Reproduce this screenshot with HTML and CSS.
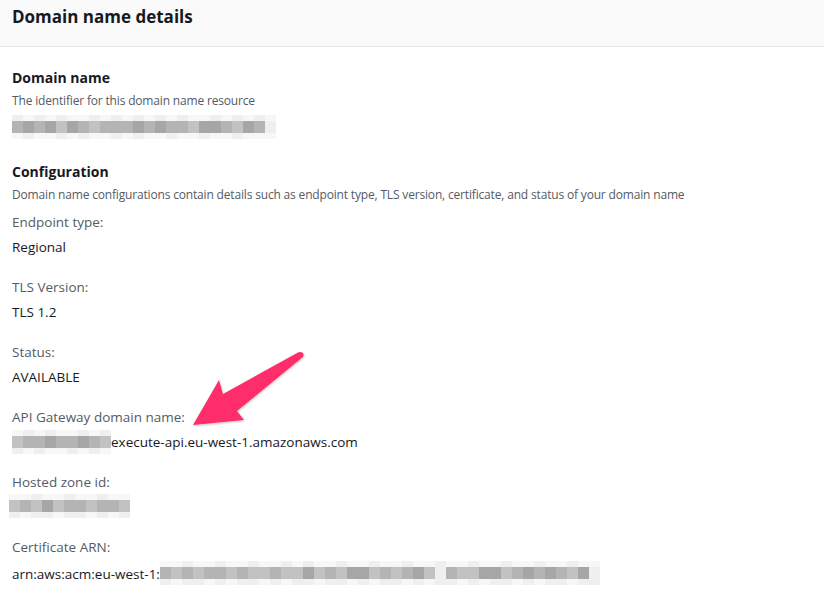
FILE: index.html
```html
<!DOCTYPE html>
<html>
<head>
<meta charset="utf-8">
<link rel="stylesheet" href="styles.css">
</head>
<body>
<div class="panel">
  <header class="panel-header"><h2>Domain name details</h2></header>
  <div class="panel-body">
    <section class="group">
      <h3>Domain name</h3>
      <p class="desc">The identifier for this domain name resource</p>
      <div class="blur blur-domain">
        <div class="row top"><span class="c l2"></span><span class="c l1"></span><span class="c l2"></span><span class="c l1"></span><span class="c l2"></span><span class="c l1"></span><span class="c l1"></span><span class="c l2"></span><span class="c l1"></span><span class="c l2"></span><span class="c l1"></span><span class="c l2"></span><span class="c l1"></span><span class="c l2"></span><span class="c l1"></span><span class="c l2"></span><span class="c l1"></span><span class="c l1"></span><span class="c l2"></span><span class="c l1"></span><span class="c l2"></span><span class="c l1"></span><span class="c l2"></span><span class="c l1"></span></div>
        <div class="row mid"><span class="c d2"></span><span class="c d3"></span><span class="c d2"></span><span class="c d3"></span><span class="c d1"></span><span class="c d3"></span><span class="c d2"></span><span class="c d1"></span><span class="c d2"></span><span class="c d2"></span><span class="c d2"></span><span class="c d3"></span><span class="c d2"></span><span class="c d3"></span><span class="c d2"></span><span class="c d2"></span><span class="c d1"></span><span class="c d3"></span><span class="c d3"></span><span class="c d2"></span><span class="c d1"></span><span class="c d3"></span><span class="c d2"></span><span class="c l2"></span></div>
        <div class="row bot"><span class="c l1"></span><span class="c l2"></span><span class="c l1"></span><span class="c l1"></span><span class="c l2"></span><span class="c l1"></span><span class="c l2"></span><span class="c l1"></span><span class="c l1"></span><span class="c l2"></span><span class="c l1"></span><span class="c l2"></span><span class="c l1"></span><span class="c l1"></span><span class="c l2"></span><span class="c l1"></span><span class="c l1"></span><span class="c l2"></span><span class="c l1"></span><span class="c l1"></span><span class="c l2"></span><span class="c l1"></span><span class="c l1"></span><span class="c l1"></span></div>
      </div>
    </section>

    <section class="group">
      <h3>Configuration</h3>
      <p class="desc">Domain name configurations contain details such as endpoint type, TLS version, certificate, and status of your domain name</p>
      <dl class="fields">
        <div class="field"><dt>Endpoint type:</dt><dd>Regional</dd></div>
        <div class="field"><dt>TLS Version:</dt><dd>TLS 1.2</dd></div>
        <div class="field"><dt>Status:</dt><dd>AVAILABLE</dd></div>
        <div class="field"><dt>API Gateway domain name:</dt>
          <dd class="inline-val">
            <span class="blur blur-api">
              <span class="row top"><span class="c l1"></span><span class="c l2"></span><span class="c l1"></span><span class="c l2"></span><span class="c l1"></span><span class="c l1"></span><span class="c l2"></span><span class="c l1"></span><span class="c l2"></span></span>
              <span class="row mid"><span class="c d1"></span><span class="c d2"></span><span class="c d2"></span><span class="c d3"></span><span class="c d2"></span><span class="c d2"></span><span class="c d3"></span><span class="c d2"></span><span class="c d1"></span></span>
              <span class="row bot"><span class="c l2"></span><span class="c l1"></span><span class="c l2"></span><span class="c l1"></span><span class="c l1"></span><span class="c l2"></span><span class="c l1"></span><span class="c l2"></span><span class="c l1"></span></span>
            </span><span>execute-api.eu-west-1.amazonaws.com</span>
          </dd>
        </div>
        <div class="field"><dt>Hosted zone id:</dt>
          <dd class="blur-dd">
            <span class="blur blur-zone">
              <span class="row top"><span class="c l1"></span><span class="c l1"></span><span class="c l2"></span><span class="c l1"></span><span class="c l1"></span><span class="c l2"></span><span class="c l1"></span><span class="c l1"></span><span class="c l2"></span><span class="c l1"></span><span class="c l1"></span></span>
              <span class="row mid"><span class="c d1"></span><span class="c d2"></span><span class="c d1"></span><span class="c d3"></span><span class="c d1"></span><span class="c d2"></span><span class="c d2"></span><span class="c d1"></span><span class="c d2"></span><span class="c d2"></span><span class="c d1"></span></span>
              <span class="row bot"><span class="c l2"></span><span class="c l1"></span><span class="c l2"></span><span class="c l2"></span><span class="c l1"></span><span class="c l2"></span><span class="c l2"></span><span class="c l1"></span><span class="c l2"></span><span class="c l1"></span><span class="c l2"></span></span>
            </span>
          </dd>
        </div>
        <div class="field"><dt>Certificate ARN:</dt>
          <dd class="inline-val"><span>arn:aws:acm:eu-west-1:</span><span class="blur blur-arn">
              <span class="row top"><span class="c l1"></span><span class="c l1"></span><span class="c l2"></span><span class="c l1"></span><span class="c l1"></span><span class="c l2"></span><span class="c l1"></span><span class="c l1"></span><span class="c l2"></span><span class="c l1"></span><span class="c l1"></span><span class="c l2"></span><span class="c l1"></span><span class="c l2"></span><span class="c l1"></span><span class="c l1"></span><span class="c l2"></span><span class="c l1"></span><span class="c l1"></span><span class="c l2"></span><span class="c l1"></span><span class="c l1"></span><span class="c l2"></span><span class="c l1"></span><span class="c l1"></span><span class="c l2"></span><span class="c l1"></span><span class="c l1"></span><span class="c l2"></span><span class="c l1"></span><span class="c l1"></span><span class="c l2"></span><span class="c l1"></span><span class="c l1"></span><span class="c l2"></span><span class="c l1"></span><span class="c l1"></span><span class="c l2"></span><span class="c l1"></span><span class="c l1"></span></span>
              <span class="row mid"><span class="c d2"></span><span class="c d1"></span><span class="c d2"></span><span class="c d1"></span><span class="c d2"></span><span class="c d2"></span><span class="c d1"></span><span class="c d2"></span><span class="c d1"></span><span class="c d1"></span><span class="c d2"></span><span class="c d1"></span><span class="c d1"></span><span class="c d3"></span><span class="c d1"></span><span class="c d2"></span><span class="c d1"></span><span class="c d3"></span><span class="c d3"></span><span class="c d1"></span><span class="c d2"></span><span class="c d1"></span><span class="c d2"></span><span class="c d3"></span><span class="c d1"></span><span class="c l2"></span><span class="c d2"></span><span class="c d1"></span><span class="c d1"></span><span class="c d3"></span><span class="c d3"></span><span class="c d1"></span><span class="c d2"></span><span class="c d3"></span><span class="c d2"></span><span class="c d3"></span><span class="c d2"></span><span class="c d1"></span><span class="c d3"></span><span class="c l2"></span></span>
              <span class="row bot"><span class="c l2"></span><span class="c l1"></span><span class="c l2"></span><span class="c l2"></span><span class="c l1"></span><span class="c l2"></span><span class="c l1"></span><span class="c l2"></span><span class="c l2"></span><span class="c l1"></span><span class="c l2"></span><span class="c l1"></span><span class="c l2"></span><span class="c l2"></span><span class="c l1"></span><span class="c l2"></span><span class="c l2"></span><span class="c l1"></span><span class="c l2"></span><span class="c l1"></span><span class="c l2"></span><span class="c l2"></span><span class="c l1"></span><span class="c l2"></span><span class="c l1"></span><span class="c l2"></span><span class="c l2"></span><span class="c l1"></span><span class="c l2"></span><span class="c l1"></span><span class="c l2"></span><span class="c l2"></span><span class="c l1"></span><span class="c l2"></span><span class="c l1"></span><span class="c l2"></span><span class="c l2"></span><span class="c l1"></span><span class="c l2"></span><span class="c l2"></span></span>
            </span></dd>
        </div>
      </dl>
    </section>
  </div>
</div>
<svg class="arrow" width="824" height="602" viewBox="0 0 824 602">
  <defs>
    <filter id="sh" x="-20%" y="-20%" width="140%" height="140%">
      <feDropShadow dx="0.5" dy="1" stdDeviation="1" flood-color="#000" flood-opacity="0.25"/>
    </filter>
  </defs>
  <path filter="url(#sh)" fill="#ff2d6b" d="M193 425 L219 380 L223 394 L298 352.5 Q302 351 303.5 354 Q304 357 301 358.5 L237 411 L244 420 Z"/>
</svg>
</body>
</html>
```
FILE: styles.css
```css
* { box-sizing: border-box; }
html, body { margin: 0; padding: 0; background: #fff; }
body {
  font-family: "Open Sans", "Noto Sans", Arial, sans-serif;
  color: #16191f;
  width: 824px;
  height: 602px;
  overflow: hidden;
  position: relative;
}
.panel-header {
  background: #fafafa;
  border-bottom: 1px solid #e7e7e7;
  height: 47px;
  padding: 5px 12px 0;
}
.panel-header h2 {
  margin: 0;
  font-size: 17px;
  font-weight: 700;
  line-height: 24px;
}
.panel-body { padding: 21px 12px 0; }
.group h3 {
  margin: 0;
  font-size: 14px;
  font-weight: 700;
  line-height: 20px;
}
.group + .group { margin-top: 23px; }
.desc {
  margin: 5px 0 0;
  font-size: 12px;
  line-height: 16px;
  color: #545b64;
  letter-spacing: -0.17px;
}
.blur { display: flex; flex-direction: column; }
.blur .row { display: flex; }
.blur .c { display: block; width: 11px; flex: none; }
.blur .top .c { height: 6px; }
.blur .mid .c { height: 12px; }
.blur .bot .c { height: 6px; }
.l1 { background: #f7f7f7; }
.l2 { background: #efefef; }
.d1 { background: #c2c2c2; }
.d2 { background: #b4b4b4; }
.d3 { background: #a6a6a6; }
.blur-domain { margin-top: 6px; }
.fields { margin: 10px 0 0; }
.field { margin-bottom: 22px; }
.field dt {
  font-size: 13.5px;
  line-height: 18px;
  color: #545b64;
}
.field dd {
  margin: 7px 0 0;
  font-size: 13.5px;
  line-height: 18px;
  color: #16191f;
}
.inline-val { display: flex; align-items: center; }
.blur-api { margin-top: -6px; margin-bottom: -5px; }
.blur-arn { margin-top: -2px; }
.field .blur-dd { display: flex; margin-left: -3px; height: 18px; }
.blur-zone { margin-top: -4px; }
.arrow { position: absolute; left: 0; top: 0; pointer-events: none; }
```
